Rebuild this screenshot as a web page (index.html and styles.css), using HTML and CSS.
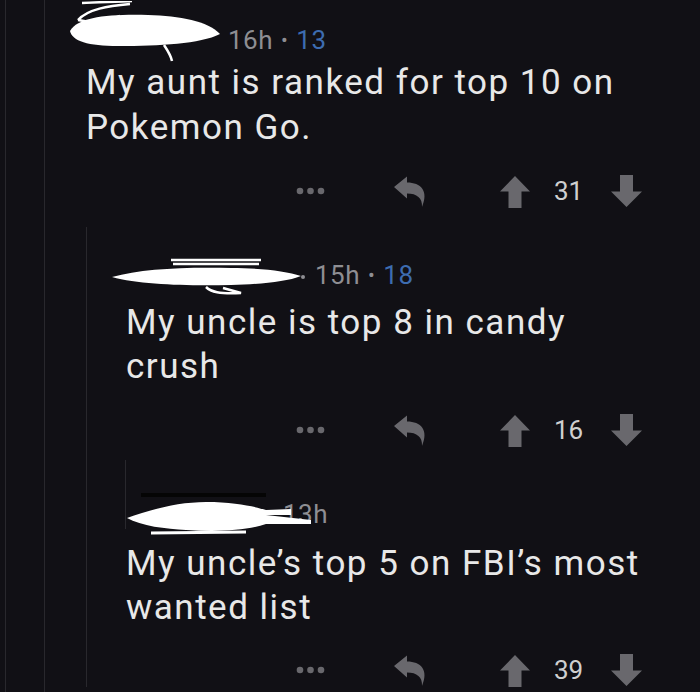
FILE: index.html
```
<!DOCTYPE html>
<html lang="en">
<head>
    <meta charset="UTF-8">
    <meta name="viewport" content="width=device-width, initial-scale=1.0">
    <title>Comment thread</title>
    <link rel="stylesheet" href="styles.css">
</head>
<body>
    <div class="thread">
        <div class="rail">
            <div class="comment first">
                <div class="meta">
                    <span class="user u1">
                        <svg class="redact" width="160" height="62" viewBox="0 0 160 62">
                            <path d="M2 30 C10 16 40 13 80 14 C112 15 140 20 152 33 C132 43 92 45 50 45 C20 45 4 40 2 30 Z" fill="#fff"/>
                            <path d="M10 19 C20 8 40 5 62 3 M10 19 C24 22 40 20 52 15 M14 2 C30 1 50 1 64 0" stroke="#fff" stroke-width="2.5" fill="none"/>
                            <path d="M96 44 C100 50 103 55 104 60" stroke="#fff" stroke-width="2.5" fill="none"/>
                        </svg>
                    </span>
                    <span class="time">16h</span>
                    <span class="dot">&bull;</span>
                    <span class="score">13</span>
                </div>
                <p class="body">My aunt is ranked for top 10 on<br>Pokemon Go.</p>
                <div class="actions">
                    <svg class="more" width="29" height="8" viewBox="0 0 29 8"><circle cx="4" cy="4" r="3.3"/><circle cx="14.5" cy="4" r="3.3"/><circle cx="25" cy="4" r="3.3"/></svg>
                    <svg class="reply" width="36" height="33" viewBox="0 0 36 33"><path d="M1 12 L14 1.5 L14 7.5 C28 7.5 36 16 29 32 C29.5 23 24 18.5 14 18.5 L14 23.5 Z"/></svg>
                    <svg class="up" width="32" height="33" viewBox="0 0 32 33"><path d="M16 1 L31 16.5 L22.5 16.5 L22.5 33 L9.5 33 L9.5 16.5 L1 16.5 Z"/></svg>
                    <span class="votes">31</span>
                    <svg class="down" width="33" height="33" viewBox="0 0 33 33"><path d="M10 0 L23 0 L23 16.5 L32 16.5 L16.5 32 L1 16.5 L10 16.5 Z"/></svg>
                </div>

                <div class="replies">
                    <div class="comment second">
                        <div class="meta">
                            <span class="user u2">
                                <svg class="redact" width="196" height="40" viewBox="0 0 196 40">
                                    <path d="M1 20 C30 12 70 10 120 11 C150 11 175 14 190 19 C175 25 150 27 120 28 C80 29 30 28 1 20 Z" fill="#fff"/>
                                    <path d="M60 3 L150 3 M62 7 L148 7" stroke="#fff" stroke-width="2.5"/>
                                    <path d="M95 30 C100 35 108 37 130 36 L112 31" stroke="#fff" stroke-width="2.5" fill="none"/>
                                    <circle cx="192" cy="20" r="2" fill="#8e8e93"/>
                                </svg>
                            </span>
                            <span class="time">15h</span>
                            <span class="dot">&bull;</span>
                            <span class="score">18</span>
                        </div>
                        <p class="body">My uncle is top 8 in candy<br>crush</p>
                        <div class="actions">
                            <svg class="more" width="29" height="8" viewBox="0 0 29 8"><circle cx="4" cy="4" r="3.3"/><circle cx="14.5" cy="4" r="3.3"/><circle cx="25" cy="4" r="3.3"/></svg>
                            <svg class="reply" width="36" height="33" viewBox="0 0 36 33"><path d="M1 12 L14 1.5 L14 7.5 C28 7.5 36 16 29 32 C29.5 23 24 18.5 14 18.5 L14 23.5 Z"/></svg>
                            <svg class="up" width="32" height="33" viewBox="0 0 32 33"><path d="M16 1 L31 16.5 L22.5 16.5 L22.5 33 L9.5 33 L9.5 16.5 L1 16.5 Z"/></svg>
                            <span class="votes">16</span>
                            <svg class="down" width="33" height="33" viewBox="0 0 33 33"><path d="M10 0 L23 0 L23 16.5 L32 16.5 L16.5 32 L1 16.5 L10 16.5 Z"/></svg>
                        </div>
                    </div>

                    <div class="comment third">
                        <div class="collapsed-head">
                            <div class="meta">
                                <span class="user u3">
                                    <svg class="redact" width="190" height="46" viewBox="0 0 190 46">
                                        <path d="M15 2 L140 2" stroke="#050505" stroke-width="4"/>
                                        <path d="M1 25 C20 18 50 9 80 9 C110 9 130 14 140 17 L165 16 L165 22 L140 22 L185 27 L185 31 L140 31 C120 38 90 39 60 37 C40 36 15 33 1 25 Z" fill="#fff"/>
                                        <path d="M25 40 L120 39" stroke="#fff" stroke-width="3"/>
                                    </svg>
                                </span>
                                <span class="time">13h</span>
                            </div>
                        </div>
                        <p class="body">My uncle’s top 5 on FBI’s most<br>wanted list</p>
                        <div class="actions">
                            <svg class="more" width="29" height="8" viewBox="0 0 29 8"><circle cx="4" cy="4" r="3.3"/><circle cx="14.5" cy="4" r="3.3"/><circle cx="25" cy="4" r="3.3"/></svg>
                            <svg class="reply" width="36" height="33" viewBox="0 0 36 33"><path d="M1 12 L14 1.5 L14 7.5 C28 7.5 36 16 29 32 C29.5 23 24 18.5 14 18.5 L14 23.5 Z"/></svg>
                            <svg class="up" width="32" height="33" viewBox="0 0 32 33"><path d="M16 1 L31 16.5 L22.5 16.5 L22.5 33 L9.5 33 L9.5 16.5 L1 16.5 Z"/></svg>
                            <span class="votes">39</span>
                            <svg class="down" width="33" height="33" viewBox="0 0 33 33"><path d="M10 0 L23 0 L23 16.5 L32 16.5 L16.5 32 L1 16.5 L10 16.5 Z"/></svg>
                        </div>
                    </div>
                </div>
            </div>
        </div>
    </div>
</body>
</html>
```

FILE: styles.css
```
:root {
    --bg-color: #111015;
    --rail-color: #29282d;
    --text-color: #e8e8e8;
    --meta-color: #8e8e93;
    --score-color: #3d6cb0;
    --icon-color: #69686d;
    --votes-color: #cfcfcf;
}

html, body {
    margin: 0;
    height: 100%;
}

body {
    font-family: Roboto, "Liberation Sans", sans-serif;
    background-color: var(--bg-color);
    color: var(--text-color);
    overflow: hidden;
}

.thread {
    margin-left: 5px;
    min-height: 100%;
    border-left: 1px solid var(--rail-color);
    padding-left: 38px;
    box-sizing: border-box;
}

.rail {
    min-height: 692px;
    border-left: 1px solid var(--rail-color);
    padding-left: 40px;
}

.comment.first {
    padding-top: 25px;
    padding-left: 1px;
}

.meta {
    display: flex;
    align-items: center;
    height: 30px;
    font-size: 26px;
    letter-spacing: 0.5px;
    color: var(--meta-color);
}

.user {
    position: relative;
    display: inline-block;
    height: 30px;
    margin-right: 6px;
}

.redact {
    position: absolute;
}

.u1 { width: 136px; }
.u1 .redact { left: -18px; top: -24px; }

.u2 { width: 183px; }
.u2 .redact { left: -15px; top: -3px; }

.u3 { width: 153px; margin-right: 4px; }
.u3 .redact { left: 0; top: -6px; }

.dot {
    font-size: 20px;
    margin: 0 8px;
}

.score {
    color: var(--score-color);
}

.body {
    margin: 5px 0 0 0;
    font-size: 35px;
    line-height: 45px;
    letter-spacing: 1.5px;
    white-space: nowrap;
}

.actions {
    display: flex;
    align-items: center;
    justify-content: flex-end;
    height: 34px;
    margin-top: 24px;
    padding-right: 57px;
}

.actions svg {
    fill: var(--icon-color);
    flex-shrink: 0;
}

.more { margin-right: 68px; }
.reply { margin-right: 70px; }
.up { margin-right: 23px; }

.votes {
    width: 32px;
    margin-right: 24px;
    font-size: 26px;
    color: var(--votes-color);
}

.replies {
    margin-top: 19px;
    border-left: 1px solid var(--rail-color);
    padding-left: 39px;
}

.comment.second {
    padding-top: 33px;
}

.comment.second .body {
    margin-top: 11px;
    line-height: 44px;
}

.comment.third {
    padding-top: 13px;
}

.collapsed-head {
    margin-left: -1px;
    padding-top: 39px;
    border-left: 1px solid var(--rail-color);
}

.comment.third .body {
    margin-top: 13px;
    line-height: 44px;
}

.comment.third .actions {
    margin-top: 23px;
}
```
